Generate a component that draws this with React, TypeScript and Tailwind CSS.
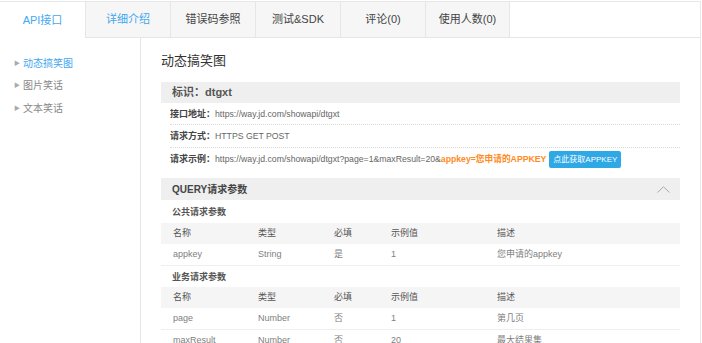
import React from 'react';

const font = { fontFamily: '"Liberation Sans", "Noto Sans CJK SC", sans-serif' };

const tabs = ['详细介绍', '错误码参照', '测试&SDK', '评论(0)', '使用人数(0)'];

const cols = 'grid grid-cols-[85px_76px_57px_106px_1fr] pl-3';

const Head: React.FC = () => (
  <div className={`${cols} h-[21px] items-center bg-[#f5f5f5] text-[9px] text-[#555]`}>
    <span>名称</span>
    <span>类型</span>
    <span>必填</span>
    <span>示例值</span>
    <span>描述</span>
  </div>
);

const Row: React.FC<{ c: string[] }> = ({ c }) => (
  <div className={`${cols} h-[22px] items-center border-b border-[#eee] text-[9px] text-[#808080]`}>
    {c.map((t, i) => (
      <span key={i} className="whitespace-nowrap">{t}</span>
    ))}
  </div>
);

const Label: React.FC<{ children: React.ReactNode }> = ({ children }) => (
  <span className="font-bold text-[#444] text-[9px] w-[45px] shrink-0 whitespace-nowrap">{children}</span>
);

const App: React.FC = () => {
  return (
    <div className="w-[702px] h-[343px] overflow-hidden bg-white pt-px" style={font}>
      <div className="w-[701px] h-[342px] border-t border-r border-[#e8e8e8] flex flex-col">
        {/* tab bar */}
        <div className="flex h-[36px] shrink-0">
          <div className="w-[85px] flex items-center justify-center text-[11px] text-[#45a8f0]">API接口</div>
          {tabs.map((t, i) => (
            <div
              key={t}
              className={`w-[85px] flex items-center justify-center text-[11px] bg-[#f6f6f6] border-l border-b border-[#e6e6e6] ${
                i === 0 ? 'text-[#3fa7f0]' : 'text-[#444]'
              } ${i === tabs.length - 1 ? 'border-r' : ''}`}
            >
              {t}
            </div>
          ))}
          <div className="flex-1 border-b border-[#e6e6e6]" />
        </div>

        <div className="flex flex-1 min-h-0">
          {/* sidebar */}
          <div className="w-[141px] shrink-0 border-r border-[#e6e6e6] pt-[14px] text-[10px]">
            {['动态搞笑图', '图片笑话', '文本笑话'].map((t, i) => (
              <div key={t} className="flex items-center h-[22.5px] pl-[14px]">
                <span className="text-[6px] text-[#aaa] mr-[3px]">▶</span>
                <span className={i === 0 ? 'text-[#3fa7f0]' : 'text-[#888]'}>{t}</span>
              </div>
            ))}
          </div>

          {/* content */}
          <div className="flex-1 pl-[20px] pr-[20px] min-w-0">
            <div className="h-[44px] flex items-center text-[13px] text-[#333] pt-[2px]">动态搞笑图</div>

            <div className="h-[21px] bg-[#efefef] flex items-center pl-[11px] text-[11px] font-bold text-[#555]">
              标识：dtgxt
            </div>

            <div className="text-[8.7px] pl-[9px] whitespace-nowrap">
              <div className="h-[22px] flex items-center pt-[2px] border-b border-dotted border-[#d8d8d8]">
                <Label>接口地址：</Label>
                <span className="text-[#666]">https://way.jd.com/showapi/dtgxt</span>
              </div>
              <div className="h-[23px] flex items-center pt-[2px] border-b border-dotted border-[#d8d8d8]">
                <Label>请求方式：</Label>
                <span className="text-[#666]">HTTPS GET POST</span>
              </div>
              <div className="h-[22px] flex items-center pt-[1px]">
                <Label>请求示例：</Label>
                <span className="text-[#666]">https://way.jd.com/showapi/dtgxt?page=1&amp;maxResult=20&amp;</span>
                <span className="font-bold text-[#ff8a1e]">appkey=您申请的APPKEY</span>
                <span className="ml-[3px] bg-[#2fa8e6] text-white text-[8px] rounded-[2px] px-[4px] h-[17px] flex items-center">
                  点此获取APPKEY
                </span>
              </div>
            </div>

            <div className="mt-[8px] h-[22px] bg-[#efefef] flex items-center justify-between pl-[11px] pr-[10px]">
              <span className="text-[10px] font-bold text-[#444]">QUERY请求参数</span>
              <svg width="13" height="7" viewBox="0 0 13 7" fill="none">
                <path d="M0.5 6.5L6.5 0.8L12.5 6.5" stroke="#aaa" strokeWidth="1" />
              </svg>
            </div>

            <div className="h-[23px] flex items-center pt-[3px] pl-[11px] text-[9px] font-bold text-[#555]">公共请求参数</div>
            <Head />
            <Row c={['appkey', 'String', '是', '1', '您申请的appkey']} />

            <div className="h-[21px] flex items-center pt-[2px] pl-[11px] text-[9px] font-bold text-[#555]">业务请求参数</div>
            <Head />
            <Row c={['page', 'Number', '否', '1', '第几页']} />
            <Row c={['maxResult', 'Number', '否', '20', '最大结果集']} />
          </div>
        </div>
      </div>
    </div>
  );
};

export default App;
